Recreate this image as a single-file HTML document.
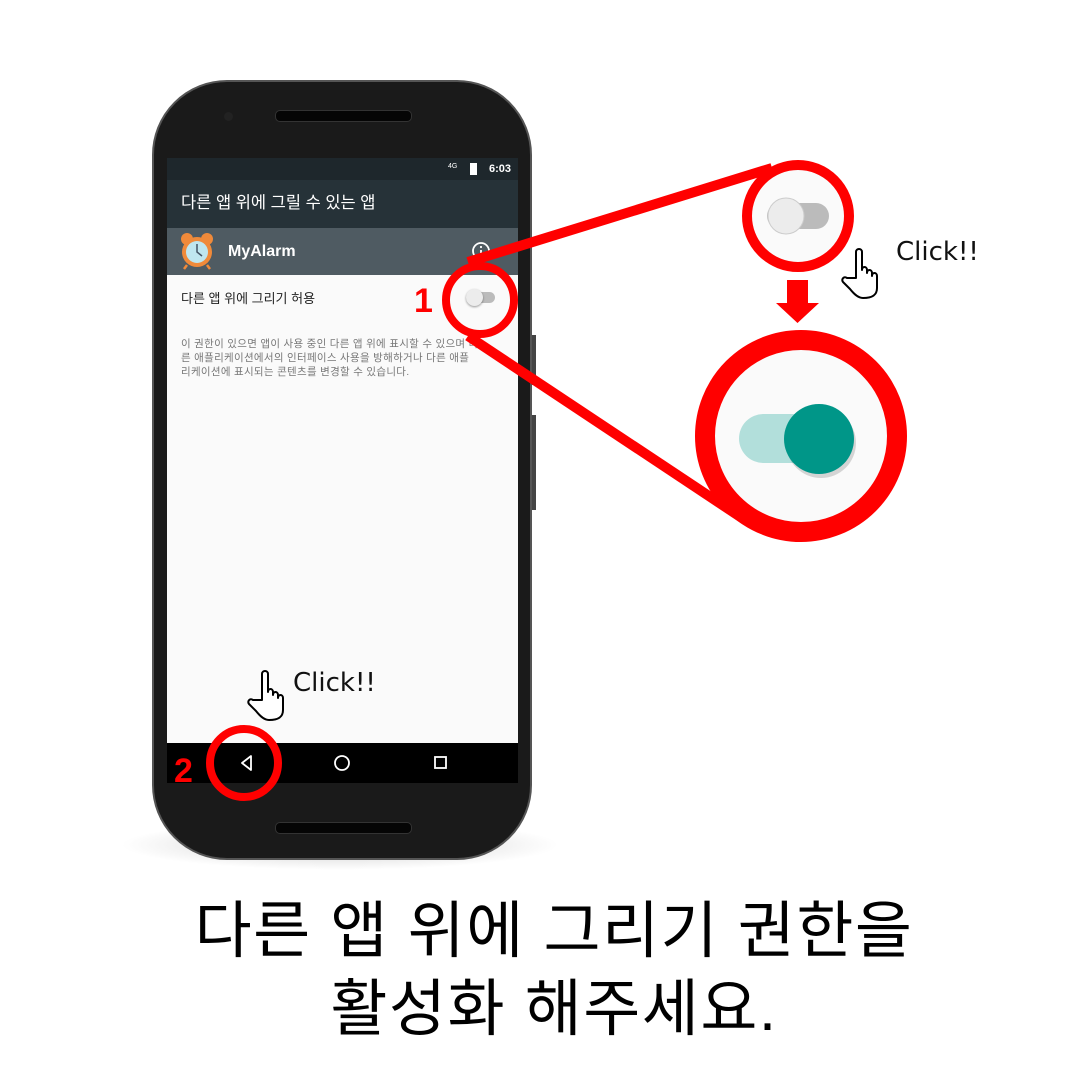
<!DOCTYPE html>
<html><head><meta charset="utf-8"><style>
body{margin:0;width:1080px;height:1080px;background:#fff;position:relative;overflow:hidden;font-family:"Liberation Sans","Noto Sans CJK KR",sans-serif}
.a{position:absolute}
</style></head><body>
<div class="a" style="left:120px;top:820px;width:440px;height:50px;border-radius:50%;background:radial-gradient(#ccc,rgba(255,255,255,0) 70%)"></div>
<div class="a" style="left:152px;top:80px;width:380px;height:780px;border-radius:75px;background:#1a1a1a;border:2px solid #555;box-sizing:border-box"></div>
<div class="a" style="left:532px;top:335px;width:4px;height:50px;background:#444"></div>
<div class="a" style="left:532px;top:415px;width:4px;height:95px;background:#444"></div>
<div class="a" style="left:275px;top:110px;width:135px;height:10px;border-radius:5px;background:#050505;border:1px solid #333"></div>
<div class="a" style="left:224px;top:112px;width:9px;height:9px;border-radius:50%;background:#222"></div>
<div class="a" style="left:275px;top:822px;width:135px;height:10px;border-radius:5px;background:#050505;border:1px solid #333"></div>
<div class="a" style="left:167px;top:158px;width:351px;height:625px;background:#fafafa"></div>
<div class="a" style="left:167px;top:158px;width:351px;height:22px;background:#1e272c;color:#fff;font-size:11px;font-weight:bold;text-align:right;line-height:22px;box-sizing:border-box;padding-right:7px">6:03</div>
<div class="a" style="left:448px;top:163px;color:#fff;font-size:7px">4G</div>
<div class="a" style="left:470px;top:163px;width:7px;height:12px;background:#fff"></div>
<div class="a" style="left:167px;top:180px;width:351px;height:48px;background:#263238;color:#fff;font-size:16.5px;line-height:46px;padding-left:14px;box-sizing:border-box">다른 앱 위에 그릴 수 있는 앱</div>
<div class="a" style="left:167px;top:228px;width:351px;height:47px;background:#4f5b62;color:#fff;font-size:16px;font-weight:bold;line-height:47px;padding-left:61px;box-sizing:border-box">MyAlarm</div>
<svg class="a" style="left:178px;top:232px" width="38" height="38" viewBox="0 0 38 38"><circle cx="9" cy="7" r="6" fill="#f08a3a"/><circle cx="29" cy="7" r="6" fill="#f08a3a"/><circle cx="19" cy="20" r="15" fill="#f08a3a"/><circle cx="19" cy="20" r="11" fill="#bfe6ef"/><path d="M19 12v8l5 4" stroke="#456" stroke-width="1.5" fill="none"/><path d="M9 33l-3 4M29 33l3 4" stroke="#f08a3a" stroke-width="2.5"/></svg>
<svg class="a" style="left:470px;top:240px" width="22" height="22"><circle cx="11" cy="11" r="8" stroke="#fff" stroke-width="1.8" fill="none"/><path d="M11 10v5" stroke="#fff" stroke-width="1.8"/><circle cx="11" cy="7" r="1.1" fill="#fff"/></svg>
<div class="a" style="left:181px;top:288px;font-size:13px;color:#222">다른 앱 위에 그리기 허용</div>
<div class="a" style="left:181px;top:337px;width:330px;font-size:10.5px;line-height:14px;color:#777;letter-spacing:0.3px">이 권한이 있으면 앱이 사용 중인 다른 앱 위에 표시할 수 있으며 다<br>른 애플리케이션에서의 인터페이스 사용을 방해하거나 다른 애플<br>리케이션에 표시되는 콘텐츠를 변경할 수 있습니다.</div>
<div class="a" style="left:466px;top:292px;width:29px;height:11px;border-radius:6px;background:#bbb"></div>
<div class="a" style="left:466px;top:289px;width:17px;height:17px;border-radius:50%;background:#ececec;box-shadow:0 1px 2px rgba(0,0,0,.4)"></div>
<div class="a" style="left:167px;top:743px;width:351px;height:40px;background:#000"></div>
<svg class="a" style="left:167px;top:743px" width="351" height="40"><path d="M84 13l-9 7 9 7z" stroke="#fff" stroke-width="1.8" fill="none" stroke-linejoin="round"/><circle cx="175" cy="20" r="7" stroke="#fff" stroke-width="1.8" fill="none"/><rect x="268" y="14" width="11" height="11" stroke="#fff" stroke-width="1.8" fill="none"/></svg>
<svg class="a" style="left:0;top:0" width="1080" height="1080">
<g stroke="#f00" fill="none">
<line x1="468" y1="262" x2="772" y2="168" stroke-width="10"/>
<line x1="468" y1="336" x2="745" y2="520" stroke-width="10"/>
<circle cx="480" cy="300" r="34" stroke-width="8"/>
</g>
<circle cx="798" cy="216" r="51" fill="#fafafa" stroke="#f00" stroke-width="10"/>
<circle cx="801" cy="436" r="96" fill="#fafafa" stroke="#f00" stroke-width="20"/>
<rect x="767" y="203" width="62" height="26" rx="13" fill="#bbb"/>
<circle cx="786" cy="216" r="18" fill="#ececec" stroke="#ccc" stroke-width="1"/>
<rect x="739" y="414" width="78" height="49" rx="24.5" fill="#b2dfdb"/>
<circle cx="821" cy="443" r="35" fill="#000" opacity=".15"/>
<circle cx="819" cy="439" r="35" fill="#009688"/>
<path d="M787 280h21v23h11l-21.5 20-21.5-20h11z" fill="#f00"/>
<text x="414" y="312" font-size="34" font-weight="bold" fill="#f00" font-family="Liberation Sans">1</text>
<text x="174" y="782" font-size="34" font-weight="bold" fill="#f00" font-family="Liberation Sans">2</text>
<circle cx="244" cy="763" r="34" fill="none" stroke="#f00" stroke-width="8"/>
<g stroke="#000" stroke-width="2" fill="#fff" stroke-linejoin="round">
<path d="M262 700v-26c0-4 6-4 6 0v18c0-4 5-4 5 0v3c0-4 5-4 5 0v3c0-4 5-4 5 0v12c0 8-6 10-14 10-5 0-9-4-13-9l-7-7c-2-3 1-6 4-4z"/>
<path d="M856 278v-26c0-4 6-4 6 0v18c0-4 5-4 5 0v3c0-4 5-4 5 0v3c0-4 5-4 5 0v12c0 8-6 10-14 10-5 0-9-4-13-9l-7-7c-2-3 1-6 4-4z"/>
</g>
<text x="293" y="691" font-size="26" fill="#111" font-family="DejaVu Sans">Click!!</text>
<text x="896" y="260" font-size="26" fill="#111" font-family="DejaVu Sans">Click!!</text>
</svg>
<div class="a" style="left:14px;top:893px;width:1080px;text-align:center;font-size:62px;line-height:78px;color:#000;letter-spacing:1.5px">다른 앱 위에 그리기 권한을<br>활성화 해주세요.</div>
</body></html>
